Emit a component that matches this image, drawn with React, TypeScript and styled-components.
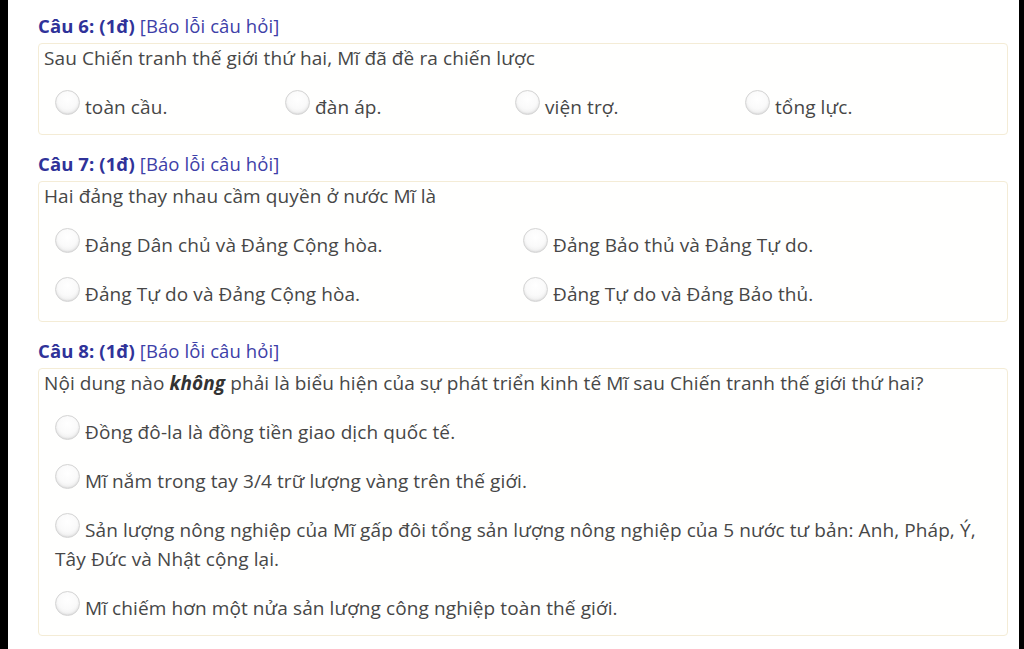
import React from "react";
import styled, { createGlobalStyle } from "styled-components";

const Global = createGlobalStyle`
  html, body { margin: 0; padding: 0; background: #000; }
  body { font-family: "Open Sans", "Noto Sans", sans-serif; }
`;

const Screen = styled.div`
  margin: 0 5px 0 8px;
  background: #fff;
  height: 649px;
  padding: 13px 11px 0 30px;
  box-sizing: border-box;
  overflow: hidden;
`;

const Section = styled.section`
  margin-bottom: 16px;
`;

const Header = styled.div`
  font-size: 18.5px;
  line-height: 26px;
  color: #3d40a8;
  margin-bottom: 4px;
  letter-spacing: 0.1px;
  b { font-weight: 700; color: #2f3299; }
`;

const Card = styled.div`
  border: 1px solid #f4ecd6;
  border-radius: 4px;
  background: #fffffe;
  padding: 0 5px 12px 5px;
  color: #474747;
  font-size: 19px;
  line-height: 29px;
  letter-spacing: 0.1px;
`;

const Question = styled.p`
  margin: 0;
  strong { font-weight: 700; font-style: italic; color: #333; }
`;

const Options = styled.div<{ $cols: string }>`
  display: grid;
  grid-template-columns: ${(p) => p.$cols};
  padding-left: 11px;
`;

const Option = styled.label`
  display: block;
  margin-top: 20px;
  cursor: pointer;
`;

const Radio = styled.span`
  display: inline-block;
  width: 25px;
  height: 25px;
  box-sizing: border-box;
  border-radius: 50%;
  border: 1px solid #d4d4d4;
  background: radial-gradient(circle at 50% 35%, #ffffff 0%, #fafafa 50%, #e6e6e6 100%);
  box-shadow: inset 0 -1px 2px rgba(0, 0, 0, 0.08);
  vertical-align: -1px;
  margin: -5px 5px 0 0;
`;

type Q = {
  num: number;
  text: React.ReactNode;
  cols: string;
  options: string[];
};

const questions: Q[] = [
  {
    num: 6,
    text: "Sau Chiến tranh thế giới thứ hai, Mĩ đã đề ra chiến lược",
    cols: "repeat(4, 230px)",
    options: ["toàn cầu.", "đàn áp.", "viện trợ.", "tổng lực."],
  },
  {
    num: 7,
    text: "Hai đảng thay nhau cầm quyền ở nước Mĩ là",
    cols: "repeat(2, 468px)",
    options: [
      "Đảng Dân chủ và Đảng Cộng hòa.",
      "Đảng Bảo thủ và Đảng Tự do.",
      "Đảng Tự do và Đảng Cộng hòa.",
      "Đảng Tự do và Đảng Bảo thủ.",
    ],
  },
  {
    num: 8,
    text: (
      <>
        Nội dung nào <strong>không</strong> phải là biểu hiện của sự phát triển kinh tế Mĩ sau Chiến tranh thế giới thứ hai?
      </>
    ),
    cols: "1fr",
    options: [
      "Đồng đô-la là đồng tiền giao dịch quốc tế.",
      "Mĩ nắm trong tay 3/4 trữ lượng vàng trên thế giới.",
      "Sản lượng nông nghiệp của Mĩ gấp đôi tổng sản lượng nông nghiệp của 5 nước tư bản: Anh, Pháp, Ý, Tây Đức và Nhật cộng lại.",
      "Mĩ chiếm hơn một nửa sản lượng công nghiệp toàn thế giới.",
    ],
  },
];

export default function App() {
  return (
    <>
      <Global />
      <Screen>
        {questions.map((q) => (
          <Section key={q.num}>
            <Header>
              <b>Câu {q.num}: (1đ)</b> [Báo lỗi câu hỏi]
            </Header>
            <Card>
              <Question>{q.text}</Question>
              <Options $cols={q.cols}>
                {q.options.map((o) => (
                  <Option key={o}>
                    <Radio />
                    {o}
                  </Option>
                ))}
              </Options>
            </Card>
          </Section>
        ))}
      </Screen>
    </>
  );
}
